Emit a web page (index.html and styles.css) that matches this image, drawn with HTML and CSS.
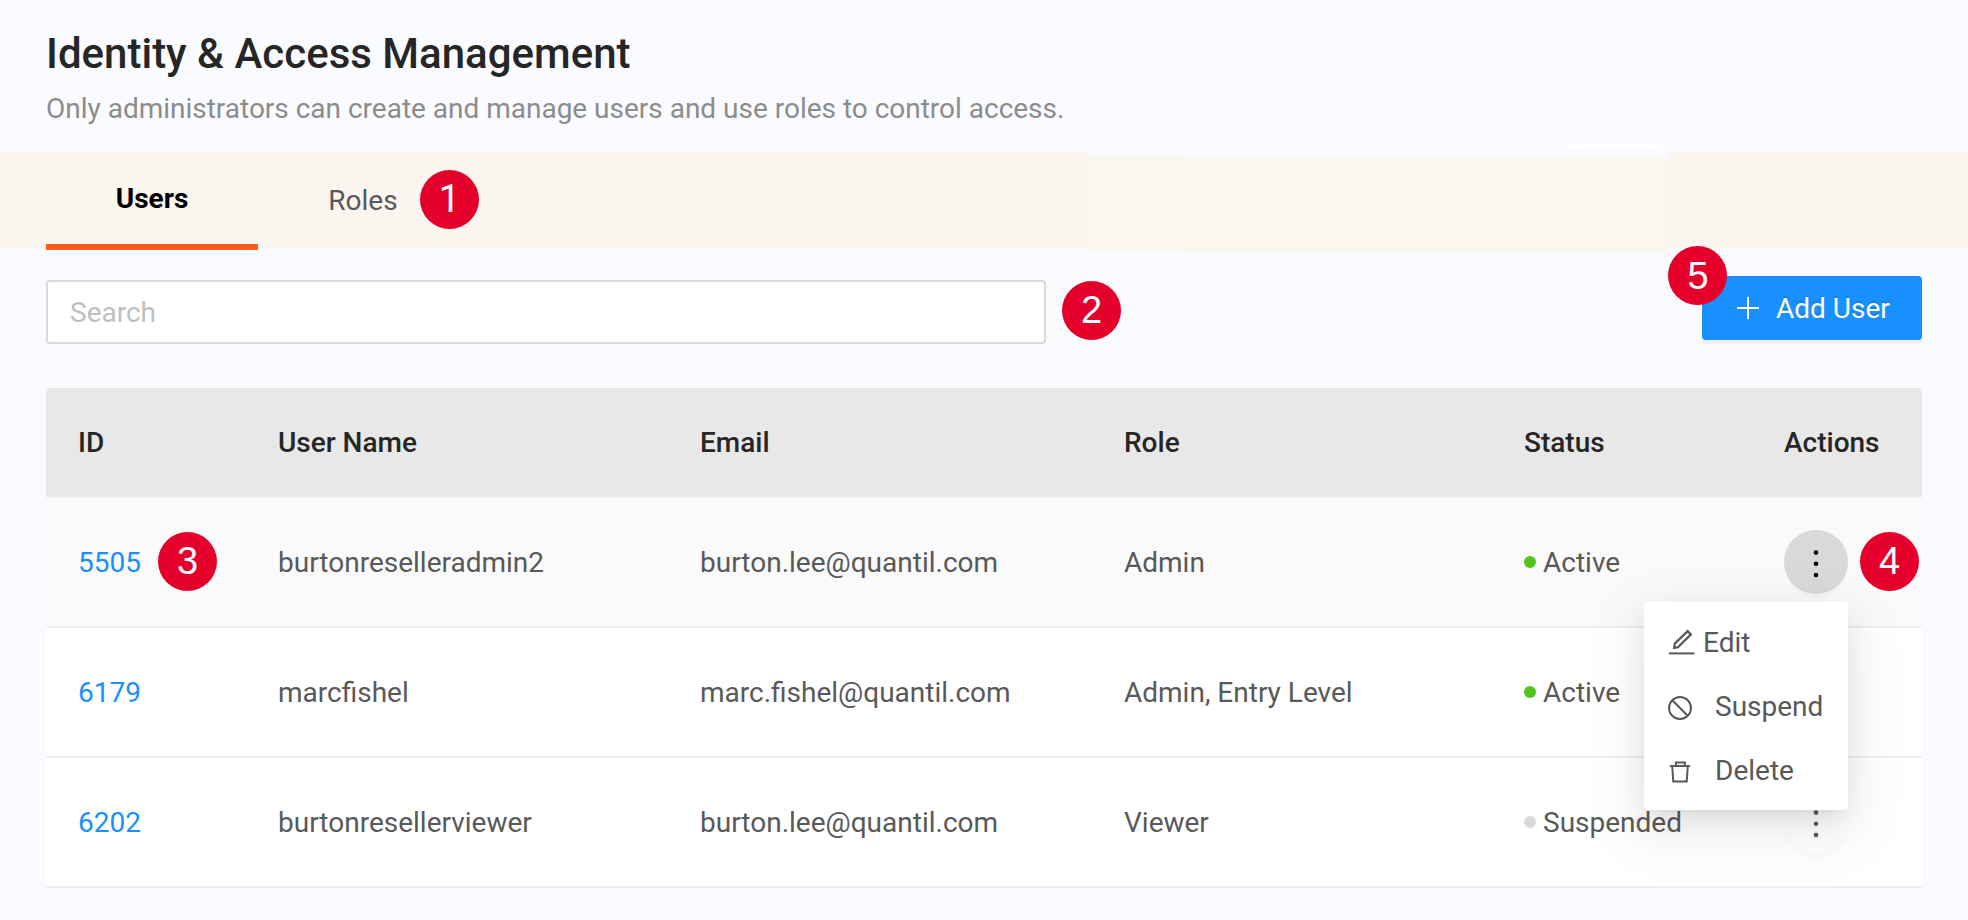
FILE: index.html
```html
<!DOCTYPE html>
<html lang="en">
<head>
<meta charset="utf-8">
<title>Identity &amp; Access Management</title>
<link rel="stylesheet" href="styles.css">
</head>
<body>
<header class="page-header">
  <h1 class="title">Identity &amp; Access Management</h1>
  <p class="subtitle">Only administrators can create and manage users and use roles to control access.</p>
</header>
<nav class="tabs">
  <span class="patch patch-a"></span><span class="patch patch-b"></span><span class="patch-line"></span>
  <a class="tab tab-active">Users</a>
  <a class="tab tab-roles">Roles<span class="badge badge-tabs">1</span></a>
</nav>
<section class="toolbar">
  <input class="search" type="text" placeholder="Search">
  <span class="badge">2</span>
  <button class="add-btn" type="button">
    <svg class="plus" viewBox="0 0 22 22"><path d="M11 0v22M0 11h22" stroke="#fff" stroke-width="2"/></svg>
    <span class="add-label">Add User</span>
    <span class="badge badge-add">5</span>
  </button>
</section>
<main class="table">
  <div class="row head">
    <span>ID</span><span>User Name</span><span>Email</span><span>Role</span><span>Status</span><span>Actions</span>
  </div>
  <div class="row hovered">
    <span class="id">5505<span class="badge badge-id">3</span></span><span>burtonreselleradmin2</span><span>burton.lee@quantil.com</span><span>Admin</span>
    <span class="status"><i class="dot"></i>Active</span>
    <div class="actions">
      <button class="more more-active" type="button"><svg viewBox="0 0 64 64"><circle cx="32" cy="22.6" r="2.3"/><circle cx="32" cy="33.8" r="2.3"/><circle cx="32" cy="45" r="2.3"/></svg></button>
      <span class="badge badge-actions">4</span>
      <div class="menu">
        <div class="item item-edit">
          <svg class="icon" viewBox="0 0 28 28"><path d="M1 24.4h25.4"/><path d="M19.6 2.1l3.3 3.3L10 18.2l-3.9.7.7-4.3z" stroke-width="2.2"/></svg>
          <span>Edit</span>
        </div>
        <div class="item">
          <svg class="icon" viewBox="0 0 28 28"><circle cx="12" cy="15" r="11"/><path d="M4.3 7.3l15.4 15.4"/></svg>
          <span>Suspend</span>
        </div>
        <div class="item">
          <svg class="icon" viewBox="0 0 28 28"><path d="M1.8 9h20.4M7.9 9V5.4h9V9M4.2 9l1.1 15.4h13.4L19.8 9"/></svg>
          <span>Delete</span>
        </div>
      </div>
    </div>
  </div>
  <div class="row">
    <span class="id">6179</span><span>marcfishel</span><span>marc.fishel@quantil.com</span><span>Admin, Entry Level</span>
    <span class="status"><i class="dot"></i>Active</span>
    <div class="actions"><button class="more" type="button"><svg viewBox="0 0 64 64"><circle cx="32" cy="22.6" r="2.3"/><circle cx="32" cy="33.8" r="2.3"/><circle cx="32" cy="45" r="2.3"/></svg></button></div>
  </div>
  <div class="row">
    <span class="id">6202</span><span>burtonresellerviewer</span><span>burton.lee@quantil.com</span><span>Viewer</span>
    <span class="status"><i class="dot dot-off"></i>Suspended</span>
    <div class="actions"><button class="more" type="button"><svg viewBox="0 0 64 64"><circle cx="32" cy="22.6" r="2.3"/><circle cx="32" cy="33.8" r="2.3"/><circle cx="32" cy="45" r="2.3"/></svg></button></div>
  </div>
</main>
</body>
</html>
```
FILE: styles.css
```css
* { box-sizing: border-box; }
body {
  margin: 0;
  height: 920px;
  overflow: hidden;
  background: #fafbff;
  color: #595959;
  font: 28px/44px Roboto, "Liberation Sans", sans-serif;
}
.page-header { height: 152px; padding: 26px 46px 0; }
.title { margin: 0; font-size: 42px; line-height: 56px; font-weight: 500; color: #262626; }
.subtitle { margin: 5px 0 0; color: #8c8c8c; letter-spacing: -.01px; }
.tabs {
  position: relative;
  display: flex;
  height: 96px;
  padding-left: 46px;
  background: #faf5ef;
}
.patch, .patch-line { position: absolute; }
.patch { background: #faf7ef; box-shadow: 0 -6px 0 #fafbff; height: 96px; }
.patch-a { left: 1086px; width: 99px; top: 2px; }
.patch-b { left: 1185px; width: 484px; top: 6px; }
.patch-line { left: 1569px; top: -3px; margin-top: -6px; width: 91px; height: 4px; background: #fff; }
.tab {
  position: relative;
  width: 212px;
  height: 98px;
  padding-top: 27px;
  text-align: center;
}
.tab-roles { padding-right: 2px; }
.tab-active {
  padding-top: 25px;
  color: #000;
  font-weight: 700;
  border-bottom: 6px solid #ff5a1a;
}
.badge {
  flex: none;
  width: 59px;
  height: 59px;
  border-radius: 50%;
  background: #e4002b;
  color: #fff;
  font: 38px/59px "Liberation Sans", sans-serif;
  text-align: center;
}
.badge-tabs { position: absolute; left: 162px; top: 18px; font-family: Roboto, sans-serif; }
.badge-add { position: absolute; left: -34px; top: -30px; padding-left: 1px; line-height: 60px; }
.badge-id { position: absolute; left: 80px; top: -7px; }
.badge-actions { position: absolute; left: 76px; top: 2px; }
.toolbar {
  display: flex;
  align-items: flex-start;
  height: 140px;
  padding: 32px 46px 0;
}
.search {
  width: 1000px;
  height: 64px;
  padding: 0 22px;
  border: 2px solid #d9d9d9;
  border-radius: 4px;
  background: #fff;
  font: inherit;
}
.search::placeholder { color: #bfbfbf; opacity: 1; }
.toolbar > .badge { margin: 1px 0 0 16px; }
.add-btn {
  position: relative;
  display: flex;
  align-items: center;
  width: 220px;
  height: 64px;
  margin: -4px 0 0 auto;
  padding: 0 0 0 35px;
  border: 0;
  border-radius: 4px;
  background: #1890ff;
  box-shadow: 0 4px 0 rgba(0, 0, 0, .043);
  color: #fff;
  font: inherit;
}
.plus { width: 22px; height: 22px; margin-right: 17px; }
.add-label { padding-top: 2px; text-shadow: 0 -2px 0 rgba(0, 0, 0, .12); }
.table { margin: 0 46px; background: #fff; border-radius: 4px 4px 0 0; }
.row {
  display: grid;
  grid-template-columns: 200px 422px 424px 400px 260px 1fr;
  align-items: center;
  height: 130px;
  padding-left: 32px;
  border-bottom: 2px solid #f0f0f0;
}
.row > span { padding-top: 2px; }
.head {
  height: 110px;
  background: #e8e8e8;
  border-radius: 4px 4px 0 0;
  color: #262626;
  font-weight: 500;
}
.hovered { background: #fafafa; }
.id { position: relative; color: #1890ff; }
.status { display: flex; align-items: center; }
.dot { width: 12px; height: 12px; margin: 0 7px 2px 0; border-radius: 50%; background: #52c41a; }
.dot-off { background: #d9d9d9; }
.actions { position: relative; height: 64px; }
.more {
  display: block;
  width: 64px;
  height: 64px;
  padding: 0;
  border: 0;
  border-radius: 50%;
  background: transparent;
  box-shadow: 0 4px 0 rgba(0, 0, 0, .016);
  fill: #595959;
}
.more svg { display: block; width: 64px; height: 64px; }
.more-active { background: #d9d9d9; fill: #000; }
.menu {
  position: absolute;
  z-index: 2;
  left: -140px;
  top: 72px;
  width: 204px;
  height: 208px;
  padding: 9px 0 7px;
  border-radius: 4px;
  background: #fff;
  box-shadow: 0 6px 12px -8px rgba(0, 0, 0, .12), 0 12px 32px rgba(0, 0, 0, .08), 0 18px 56px 16px rgba(0, 0, 0, .05);
}
.item { display: flex; align-items: center; gap: 19px; height: 64px; padding-left: 24px; }
.item-edit { gap: 7px; }
.icon { width: 28px; height: 28px; fill: none; stroke: #595959; stroke-width: 2; }
```
